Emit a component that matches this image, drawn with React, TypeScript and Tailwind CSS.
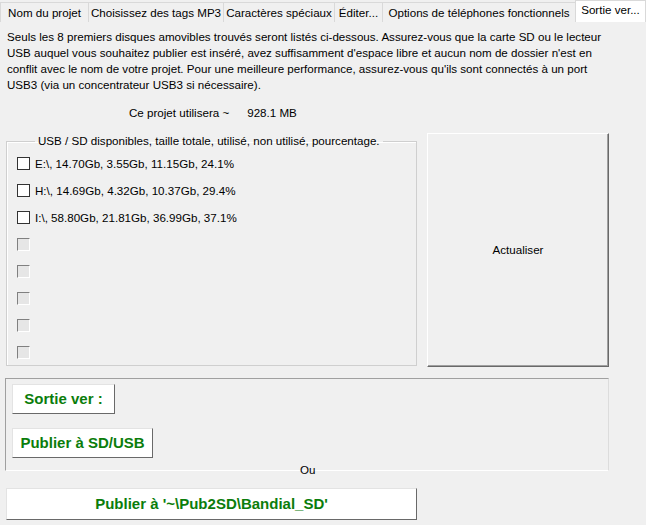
import React from "react";

const TABS = [
  { label: "Nom du projet", w: "w-[88px]" },
  { label: "Choisissez des tags MP3", w: "w-[135px]" },
  { label: "Caractères spéciaux", w: "w-[111px]" },
  { label: "Éditer...", w: "w-[48px]" },
  { label: "Options de téléphones fonctionnels", w: "w-[193px]" },
];

const DRIVES = [
  "E:\\, 14.70Gb, 3.55Gb, 11.15Gb, 24.1%",
  "H:\\, 14.69Gb, 4.32Gb, 10.37Gb, 29.4%",
  "I:\\, 58.80Gb, 21.81Gb, 36.99Gb, 37.1%",
];

function Check({ label }: { label?: string }) {
  if (label) {
    return (
      <div className="flex h-[27px] items-center gap-[5px]">
        <span className="h-[13px] w-[13px] border border-[#333333] bg-white" />
        <span className="whitespace-nowrap">{label}</span>
      </div>
    );
  }
  return (
    <div className="flex h-[27px] items-center">
      <span className="h-[13px] w-[13px] border border-t-[#808080] border-l-[#808080] border-b-white border-r-white bg-[#e6e6e6]" />
    </div>
  );
}

function GreenButton({ children, className }: { children: React.ReactNode; className: string }) {
  return (
    <button
      className={`flex h-[30px] items-center justify-center whitespace-nowrap border border-t-[#e3e3e3] border-l-[#e3e3e3] border-b-[#696969] border-r-[#696969] bg-white font-['Liberation_Sans',Arial,sans-serif] text-[15px] font-bold text-[#0b7d0b] ${className}`}
    >
      {children}
    </button>
  );
}

export default function App() {
  return (
    <div className="h-[525px] w-[646px] overflow-hidden bg-[#f0f0f0] font-['Liberation_Sans',Arial,sans-serif] text-[11.6px] text-black">
      {/* tab strip */}
      <div className="flex h-[22px] items-end">
        {TABS.map((t) => (
          <div
            key={t.label}
            className={`flex h-[20px] items-center justify-center whitespace-nowrap border border-b-0 border-r-0 border-[#d9d9d9] bg-[#f0f0f0] ${t.w}`}
          >
            {t.label}
          </div>
        ))}
        <div className="flex h-[22px] flex-1 items-center justify-center whitespace-nowrap border border-b-0 border-[#d9d9d9] bg-white pb-[3px]">
          Sortie ver...
        </div>
      </div>

      <div className="pl-[7px] pt-[7px] leading-[16px]">
        <p className="whitespace-nowrap">
          Seuls les 8 premiers disques amovibles trouvés seront listés ci-dessous. Assurez-vous que la carte SD ou le lecteur
          <br />
          USB auquel vous souhaitez publier est inséré, avez suffisamment d'espace libre et aucun nom de dossier n'est en
          <br />
          conflit avec le nom de votre projet. Pour une meilleure performance, assurez-vous qu'ils sont connectés à un port
          <br />
          USB3 (via un concentrateur USB3 si nécessaire).
        </p>
      </div>

      <div className="mt-[12px] flex h-[16px] items-center whitespace-nowrap pl-[129px] leading-[16px]">
        <span>Ce projet utilisera ~</span>
        <span className="ml-[18px]">928.1 MB</span>
      </div>

      <div className="mt-[12px] flex items-start">
        <fieldset className="ml-[6px] h-[233px] w-[411px] border border-[#cfcfcf] pl-[10px] shadow-[inset_1px_1px_0_#ffffff]">
          <legend className="ml-[18px] whitespace-nowrap px-[3px] leading-[16px]">
            USB / SD disponibles, taille totale, utilisé, non utilisé, pourcentage.
          </legend>
          <div className="mt-[1px] flex flex-col">
            {DRIVES.map((d) => (
              <Check key={d} label={d} />
            ))}
            {[0, 1, 2, 3, 4].map((i) => (
              <Check key={i} />
            ))}
          </div>
        </fieldset>

        <button className="ml-[10px] flex h-[234px] w-[182px] items-center justify-center border border-t-white border-l-white border-b-[#696969] border-r-[#696969] bg-[#f0f0f0] shadow-[inset_-1px_-1px_0_#a0a0a0]">
          Actualiser
        </button>
      </div>

      <div className="ml-[5px] mt-[11px] flex h-[93px] w-[604px] flex-col items-start gap-[14px] border border-t-[#a0a0a0] border-l-[#a0a0a0] border-b-white border-r-[#dcdcdc] pl-[6px] pt-[5px]">
        <GreenButton className="w-[103px]">Sortie ver :</GreenButton>
        <GreenButton className="w-[141px]">Publier à SD/USB</GreenButton>
      </div>

      <div className="relative -mt-[8px] flex h-[14px] items-center pl-[300px] leading-[14px]">
        Ou
      </div>

      <div className="mt-[11px] pl-[6px]">
        <GreenButton className="h-[32px] w-[411px]">Publier à '~\Pub2SD\Bandial_SD'</GreenButton>
      </div>
    </div>
  );
}
